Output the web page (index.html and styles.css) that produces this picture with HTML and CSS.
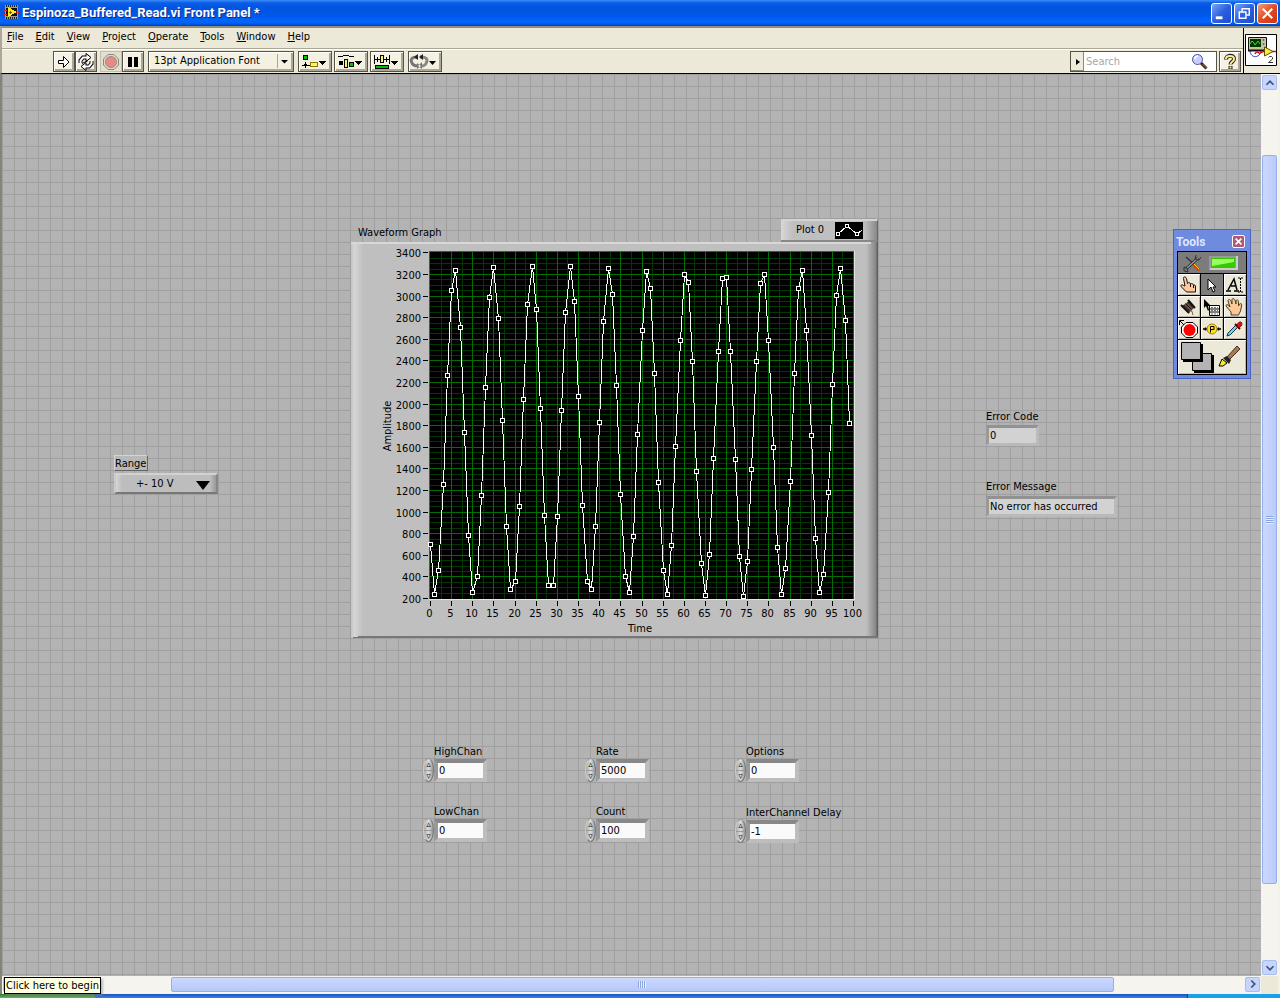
FILE: index.html
```html
<!DOCTYPE html>
<html lang="en">
<head>
<meta charset="utf-8">
<title>Espinoza_Buffered_Read.vi Front Panel *</title>
<link rel="stylesheet" href="styles.css">
</head>
<body>
<header class="titlebar">
  <svg class="app-icon" viewBox="0 0 16 16" shape-rendering="crispEdges"><rect x="2" y="0" width="13" height="14" fill="#9a9a9a"/><path d="M3 1h1M5 1h1M7 1h1M9 1h1M11 1h1M13 1h1M3 13h1M5 13h1M7 13h1M9 13h1M11 13h1M13 13h1" stroke="#222" stroke-width="2"/><rect x="3" y="3" width="11" height="8" fill="#111"/><path d="M5 2l9 5-9 5z" fill="#ffea20"/><path d="M6 7h3M7.500 5.500v3" stroke="#6a6a00"/><path d="M0 5h4M0 9h4M13 7h3" stroke="#e02020"/></svg>
  <h1 class="title">Espinoza_Buffered_Read.vi Front Panel *</h1>
  <button class="win-btn" aria-label="Minimize"><svg viewBox="0 0 20 20"><path d="M4 14.500h7" stroke="#fff" stroke-width="3"/></svg></button>
  <button class="win-btn" aria-label="Restore"><svg viewBox="0 0 20 20" fill="none" stroke="#fff" stroke-width="1.500"><path d="M7.500 8V5h7.500v6.500H12"/><path d="M4.500 8.500h7v6.500h-7z"/></svg></button>
  <button class="win-btn win-close" aria-label="Close"><svg viewBox="0 0 20 20"><path d="M5 5l10 10M15 5L5 15" stroke="#fff" stroke-width="2.200"/></svg></button>
</header>
<div class="head">
  <div class="bars">
    <nav class="menu">
      <a href="#"><u>F</u>ile</a><a href="#"><u>E</u>dit</a><a href="#"><u>V</u>iew</a><a href="#"><u>P</u>roject</a><a href="#"><u>O</u>perate</a><a href="#"><u>T</u>ools</a><a href="#"><u>W</u>indow</a><a href="#"><u>H</u>elp</a>
    </nav>
    <div class="toolbar">
      <div class="pair">
        <button class="tb" aria-label="Run"><svg viewBox="0 0 18 18"><path d="M3.500 7.500h5v-4l5.500 5.500-5.500 5.500v-4h-5z" fill="#fff" stroke="#000"/></svg></button>
        <button class="tb" aria-label="Run continuously"><svg viewBox="0 0 18 18" fill="none"><path d="M3.500 10V7.500L6 4.500h5M14.500 8v2.500L12 13.500H7" stroke="#000" stroke-width="4"/><path d="M9 .5l5 4-5 4zM9 9.500l-5 4 5 4z" fill="#fff" stroke="#000"/><path d="M3.500 10V7.500L6 4.500h5M14.500 8v2.500L12 13.500H7" stroke="#fff" stroke-width="2"/><path d="M5 10.500l6-3" stroke="#000"/></svg></button>
      </div>
      <div class="pair">
        <button class="tb off" aria-label="Abort"><svg viewBox="0 0 18 18"><path d="M6 1.500h6l4.500 4.500v6L12 16.500H6L1.500 12V6z" fill="#ddd8c8" stroke="#8a8a80"/><circle cx="9" cy="9" r="5.500" fill="#e88a84" stroke="#a08a84"/></svg></button>
        <button class="tb" aria-label="Pause"><svg viewBox="0 0 18 18" shape-rendering="crispEdges"><path d="M4 4h4v10H4zM10 4h4v10h-4z"/></svg></button>
      </div>
      <div class="font-wrap"><select class="font" aria-label="Font"><option>13pt Application Font</option></select><svg class="font-arrow" viewBox="0 0 16 16"><path d="M1.500 1v14" stroke="#aaa693"/><path d="M5 7h7l-3.500 3.500z"/></svg></div>
      <button class="tb wide" aria-label="Align objects"><svg viewBox="0 0 32 18" shape-rendering="crispEdges"><rect x="4.500" y="2.500" width="4" height="4" fill="#00c000" stroke="#000"/><path d="M3 12.500h8M6.500 9v6M5 11h3" stroke="#000"/><rect x="11.500" y="9.500" width="7" height="4" fill="#ffef6e" stroke="#8a7800"/><path d="M20 8h7l-3.500 4z"/></svg></button>
      <button class="tb wide" aria-label="Distribute objects"><svg viewBox="0 0 32 18" shape-rendering="crispEdges"><path d="M3 3.500h5M8 2.500h6M14 3.500h5" fill="none" stroke="#000"/><rect x="4" y="8" width="4" height="4"/><rect x="9.500" y="6.500" width="3" height="8" fill="#ffef6e" stroke="#000"/><rect x="14.500" y="9.500" width="4" height="4" fill="#00c000" stroke="#000"/><path d="M20 8h7l-3.500 4z"/></svg></button>
      <button class="tb wide" aria-label="Resize objects"><svg viewBox="0 0 32 18" shape-rendering="crispEdges"><path d="M3.500 2v9M18.500 2v9M4 6.500h5M13 6.500h5M6.500 4v5M15.500 4v5" stroke="#000"/><rect x="9.500" y="2.500" width="3" height="7" fill="#ffef6e" stroke="#000"/><rect x="4.500" y="12.500" width="13" height="3" fill="#00c000" stroke="#000"/><path d="M20 8h7l-3.500 4z"/></svg></button>
      <button class="tb wide last" aria-label="Reorder"><svg viewBox="0 0 32 18"><path d="M8 4C3 4 1.500 6 2.500 9s4 4 6 4" fill="none" stroke="#777" stroke-width="3"/><path d="M11 4c6-.5 8 2 6.500 5.500s-3 3.500-5 3.500" fill="none" stroke="#888" stroke-width="3"/><path d="M9 1v6L5 4zM14 1v6L10 4z" fill="#222"/><path d="M8 10v6l4-3zM13 9v7l-4-3z" fill="#777"/><path d="M20 8h7l-3.500 4z"/></svg></button>
      <div class="spacer"></div>
      <div class="search"><button class="s-arrow" aria-label="Search options"><svg viewBox="0 0 12 16"><path d="M4 5l4 3-4 3z"/></svg></button><input type="text" placeholder="Search" aria-label="Search"><svg class="lens" viewBox="0 0 18 18"><path d="M10 10l5.500 5.500" stroke="#3a2418" stroke-width="3"/><path d="M11.500 11l4 4" stroke="#b07850"/><circle cx="6.500" cy="6.500" r="5" fill="#c8ccff" stroke="#4a50a0"/><path d="M4 6c0-2 1-3 3-3" stroke="#fff" stroke-width="1.500" fill="none"/></svg></div>
      <button class="tb help" aria-label="Context help"><svg viewBox="0 0 18 18"><path d="M5 6.500c0-5 8-5 8-.5 0 3-3.500 2.500-3.500 5.500M9.500 13v3" fill="none" stroke="#222" stroke-width="4"/><path d="M5 6c0-4 8-4 8 0 0 3-3.500 2.500-3.500 5.500M9.500 13.500v2" fill="none" stroke="#ffef8a" stroke-width="2"/></svg></button>
    </div>
  </div>
  <div class="vi-icon">
    <svg viewBox="0 0 32 32"><path d="M.5.500h31v31H.5z" fill="#fff" stroke="#000"/><path d="M3.500 3.500h18v13h-18z" fill="#c8c4a0" stroke="#111"/><path d="M5 5h11v8H5z" fill="#003800"/><path d="M5 10l2-3 2 2 1 2 3-4 2 3" stroke="#30e030" fill="none"/><circle cx="18.500" cy="6" r="1" fill="#666"/><circle cx="18.500" cy="10" r="1" fill="#666"/><path d="M3 16.500h18" stroke="#111" stroke-width="2"/><path d="M5 17c1 8 10 7 11 0" fill="none" stroke="#1830d0"/><path d="M10 20c1-3 3-2 4-1s4-2 7-2M26 17.500h5" stroke="#e01010" stroke-width="1.500" fill="none"/><path d="M19.500 13l8.500 4.500-8.500 4.500z" fill="#ffea30" stroke="#605000"/><path d="M23.500 23.500l1-1h2l1 1v1.500l-4 3.500h4.500" fill="none" stroke="#333"/></svg>
  </div>
</div>
<main class="work">
  <section class="canvas">
    <div class="item range">
      <label class="range-label" for="range">Range</label>
      <div class="range-wrap"><select id="range"><option>+- 10 V</option></select><svg class="range-arrow" viewBox="0 0 14 9"><path d="M0 0h14L7 9z"/></svg></div>
    </div>

    <div class="item graph">
      <div class="graph-top"><h2>Waveform Graph</h2>
        <div class="legend"><span>Plot 0</span><svg viewBox="0 0 28 17" shape-rendering="crispEdges"><path d="M0 0h28v17H0z"/><path d="M3 12l9-8 10 8 5-4" stroke="#fff" fill="none"/><path d="M1.500 10.500h3v3h-3zM10.500 2.500h3v3h-3zM20.500 10.500h3v3h-3z" stroke="#fff"/></svg></div>
      </div>
      <svg class="chart" id="chart" viewBox="351 242 527 396" role="img" aria-label="Waveform Graph">
        <defs>
          <linearGradient id="edgeL"><stop offset="0" stop-color="#c6c6c6"/><stop offset=".3" stop-color="#d6d6d6"/><stop offset="1" stop-color="#bfbfbf"/></linearGradient>
          <linearGradient id="edgeR"><stop offset="0" stop-color="#bfbfbf"/><stop offset=".8" stop-color="#888"/><stop offset="1" stop-color="#555"/></linearGradient>
        </defs>
        <path d="M351 242h527v396H351z" fill="#bfbfbf"/>
        <path d="M351 242h12v396h-12z" fill="url(#edgeL)"/>
        <path d="M866 242h12v396h-12z" fill="url(#edgeR)"/>
        <path d="M351 242h520v2H351z" fill="#d8d8d8"/>
        <path d="M353 637h525v1H353zM358 636h520v1H358z" fill="#777"/>
        <path d="M429 251h426v349H429z" fill="#e4e4e4"/><path d="M429 251h425v348H429z" fill="#505050"/>
        <path d="M430 252h424v347H430z" fill="#000"/>
      </svg>
    </div>

    <div class="item err-code"><label for="ec">Error Code</label><input id="ec" class="field read" value="0" readonly></div>
    <div class="item err-msg"><label for="em">Error Message</label><input id="em" class="field read" value="No error has occurred" readonly></div>

    <div class="item num high"><label for="n1">HighChan</label><div class="row"><div class="spin"><button aria-label="Increase">▵</button><button aria-label="Decrease">▿</button></div><input id="n1" class="field" value="0"></div></div>
    <div class="item num rate"><label for="n2">Rate</label><div class="row"><div class="spin"><button aria-label="Increase">▵</button><button aria-label="Decrease">▿</button></div><input id="n2" class="field" value="5000"></div></div>
    <div class="item num options"><label for="n3">Options</label><div class="row"><div class="spin"><button aria-label="Increase">▵</button><button aria-label="Decrease">▿</button></div><input id="n3" class="field" value="0"></div></div>
    <div class="item num low"><label for="n4">LowChan</label><div class="row"><div class="spin"><button aria-label="Increase">▵</button><button aria-label="Decrease">▿</button></div><input id="n4" class="field" value="0"></div></div>
    <div class="item num count"><label for="n5">Count</label><div class="row"><div class="spin"><button aria-label="Increase">▵</button><button aria-label="Decrease">▿</button></div><input id="n5" class="field" value="100"></div></div>
    <div class="item num delay"><label for="n6">InterChannel Delay</label><div class="row"><div class="spin"><button aria-label="Increase">▵</button><button aria-label="Decrease">▿</button></div><input id="n6" class="field" value="-1"></div></div>

    <aside class="item palette">
      <div class="p-title"><span>Tools</span><button aria-label="Close tools"><svg viewBox="0 0 11 11"><path d="M2 2l7 7M9 2L2 9" stroke="#fff" stroke-width="2"/></svg></button></div>
      <div class="p-grid">
        <button class="auto" aria-label="Automatic tool selection"><svg viewBox="0 0 68 20"><path d="M8 4l9 8" stroke="#333" stroke-width="1.500"/><path d="M15 11l6 6" stroke="#ff3000" stroke-width="3"/><path d="M16 11l5 5" stroke="#ffd020"/><path d="M20 5L8 16" stroke="#222" stroke-width="3"/><path d="M20 5L8 16" stroke="#999" stroke-width="1.500"/><path d="M18 2l-1 4 4 1 2-3M6 14l3 1 1 4-4-1z" fill="none" stroke="#333"/><path d="M31 3h28v14H31z" fill="#999"/><path d="M32 16h27V3" stroke="#ccc" stroke-width="2" fill="none"/><path d="M33 5h24v10H33z" fill="#38c800"/><path d="M34 6h22v3l-22 4z" fill="#96ff60"/></svg></button>
        <button aria-label="Operate"><svg viewBox="0 0 22 20"><path d="M7 11L5.500 3.500C5 1.500 8 1.500 8.500 3.500l1 5c1-1.500 2.500-1 3 .5 1.500-1 2.500 0 3 1 1.500-.5 2 .5 2 2v5h-9l-5-5c-1.500-2 .5-3 2-1.500z" fill="#ffc898" stroke="#111"/><path d="M12.500 9v3M15.500 10v3" stroke="#111"/></svg></button>
        <button class="on" aria-label="Position"><svg viewBox="0 0 22 20"><path d="M7 4v11l3-3 2 5 2-1-2-4h3z" fill="#fff" stroke="#000"/></svg></button>
        <button aria-label="Edit text"><svg viewBox="0 0 22 20"><path d="M2 16h5M10 16h5M4 15L10 4l3 11M7 11h5" fill="none" stroke="#000" stroke-width="1.500"/><path d="M14 3h5M14 17h5M16.500 3v14" stroke="#000" stroke-dasharray="2 1"/></svg></button>
        <button aria-label="Wire"><svg viewBox="0 0 22 20"><path d="M4 9l7-5 6 6-6 6z" fill="#6b5040"/><path d="M3 8l8 8M10 3l7 8" stroke="#111" stroke-width="2"/><path d="M5.500 8l6 6M7.500 6.500l6 6M9.500 5l6 6" stroke="#111"/><path d="M13 14c2 0 1 2 2 4" stroke="#6b5040" fill="none"/></svg></button>
        <button aria-label="Shortcut menu"><svg viewBox="0 0 22 20"><path d="M3 2v9l2-2 2 5 1-1-1-4h3z"/><path d="M8.500 8.500h10v10h-10z" fill="#fff" stroke="#000"/><path d="M8 12h11M8 15h11" stroke="#000"/><path d="M10 10.500h7M10 13.500h7M10 17h7" stroke="#777" stroke-dasharray="2 1"/></svg></button>
        <button aria-label="Scroll"><svg viewBox="0 0 22 20"><path d="M7 18v-3l-5-6c0-2 2-2 4 1L4 4c0-2 2-2 3 0l1 3V3c0-2 2-2 3 0l1 4V4c1-2 2.500-1 2.500 1v4l1-2c2-1 2.500 0 2 2l-1 5-2 4z" fill="#ffc898" stroke="#442"/></svg></button>
        <button aria-label="Breakpoint"><svg viewBox="0 0 22 20"><path d="M8 3.500h7l4.500 4.500v6L15 18.500H8L3.500 14V8z" fill="#fff" stroke="#000"/><circle cx="11.500" cy="11" r="6" fill="#f00"/><path d="M1.500 6V1.500H6M2 2l4 4" fill="none" stroke="#000"/></svg></button>
        <button aria-label="Probe"><svg viewBox="0 0 22 20"><path d="M2 10h4M16 10h4M4.500 8.500v3M17.500 8.500v3" stroke="#000" stroke-width="1.500"/><circle cx="11" cy="10" r="5" fill="#ffe020" stroke="#a08000"/><path d="M9.500 13.500v-6h3.500v3H9.500" fill="none" stroke="#000"/></svg></button>
        <button aria-label="Get color"><svg viewBox="0 0 22 20"><path d="M3 17l1-3 8-8 2 2-8 8z" fill="#60d8e8" stroke="#234"/><path d="M11 5l5 5" stroke="#400" stroke-width="2"/><path d="M13 6c2-5 7-3 4 1l-3 2z" fill="#d01818" stroke="#800"/></svg></button>
        <button class="color" aria-label="Set color"><svg viewBox="0 0 68 34"><path d="M16 15h20v18H16z"/><path d="M14.500 13.500h19v17h-19z" fill="#b4b4b4" stroke="#000"/><path d="M5 4h20v18H5z"/><path d="M3.500 2.500h19v17h-19z" fill="#b4b4b4" stroke="#000"/><path d="M49 17L59 6l3 3-11 11z" fill="#a87858" stroke="#432"/><path d="M45 18l4-2 4 4-2 4z" fill="#222"/><path d="M44 19l5 4-4 3h-4z" fill="#f4f020" stroke="#000"/></svg></button>
      </div>
    </aside>
  </section>
  <div class="vscroll"><button aria-label="Scroll up"><svg viewBox="0 0 16 16"><path d="M4 10l4-4 4 4" /></svg></button><div class="vthumb"><i class="grip"></i></div><button aria-label="Scroll down"><svg viewBox="0 0 16 16"><path d="M4 6l4 4 4-4"/></svg></button></div>
  <div class="hscroll"><button aria-label="Scroll left"><svg viewBox="0 0 16 16"><path d="M10 4L6 8l4 4"/></svg></button><div class="hthumb"><i class="grip"></i></div><button aria-label="Scroll right"><svg viewBox="0 0 16 16"><path d="M6 4l4 4-4 4"/></svg></button></div>
  <div class="corner"></div>
</main>
<footer class="taskbar"><div class="start"></div><div class="tray"></div></footer>
<div class="tooltip" role="tooltip">Click here to begin</div>
<script src="chart.js"></script>
</body>
</html>
```
FILE: styles.css
```css
* { box-sizing: border-box; }
body { margin: 0; height: 100vh; display: flex; flex-direction: column; overflow: hidden; background: #ece9d8; font: 11px/14px Tahoma, "DejaVu Sans Condensed", "Noto Sans", sans-serif; color: #000; }
button, input, select { font: inherit; color: inherit; margin: 0; padding: 0; border-radius: 0; }
button { display: flex; align-items: center; justify-content: center; }
svg { display: block; flex: none; }
h1, h2 { margin: 0; font: inherit; }

.titlebar { flex: none; height: 26px; display: flex; align-items: center; gap: 2px; padding: 0 2px 0 3px; background: linear-gradient(#3c8cf8 0, #0a5ce8 3px, #0054e0 8px, #0058ea 16px, #0066ff 21px, #0062f4 23px, #0040c0 26px); }
.app-icon { width: 16px; height: 16px; }
.title { flex: 1; color: #fff; font: bold 13px/20px "Trebuchet MS", Roboto, sans-serif; text-shadow: 1px 1px #0a2a80; white-space: nowrap; padding-left: 1px; }
.win-btn { width: 21px; height: 21px; border: 1px solid #fff; border-radius: 3px; background: linear-gradient(135deg, #7ba4f4, #2c60e0 50%, #1c4cd0); }
.win-btn svg { width: 19px; height: 19px; }
.win-close { background: linear-gradient(135deg, #f0a080, #e04c24 50%, #c83810); }

.head { flex: none; display: flex; height: 48px; border-top: 2px solid #918e80; border-bottom: 1px solid #000; border-left: 2px solid #aca899; }
.bars { flex: 1; display: flex; flex-direction: column; }
.menu { height: 20px; display: flex; gap: 12px; padding: 2px 5px 0; }
.menu a { color: inherit; text-decoration: none; }
.toolbar { flex: 1; display: flex; align-items: center; border-top: 1px solid #aca899; box-shadow: inset 0 1px #fff; padding: 2px 2px 1px 51px; gap: 4px; }
.pair { display: flex; }
.pair + .pair { margin-left: -1px; }
.tb { width: 22px; height: 21px; border: 1px solid #55534a; background: #f4f1e2; box-shadow: inset 1px 1px #fff, inset -2px -2px #aca899; }
.tb svg { width: 18px; height: 18px; }
.tb.off { background: #e2dfce; border-color: #c2bfae; box-shadow: none; }
.tb.wide { width: 34px; margin-right: -2px; }
.tb.wide svg { width: 32px; }
.tb.last { margin-left: 2px; }
.font-wrap { position: relative; width: 146px; }
.font { appearance: none; width: 100%; height: 21px; border: 1px solid #55534a; background: #f4f1e2; box-shadow: inset 1px 1px #fff, inset -2px -2px #aca899; padding: 0 20px 2px 5px; }
.font-arrow { position: absolute; right: 2px; top: 2px; width: 16px; height: 16px; pointer-events: none; }
.spacer { flex: 1; }
.search { width: 147px; height: 21px; display: flex; align-items: center; border: 1px solid #55534a; background: #fff; }
.s-arrow { width: 13px; height: 19px; border: 0; background: #f0ecdc; box-shadow: inset -1px -1px #8a887c; }
.s-arrow svg { width: 12px; height: 16px; }
.search input { flex: 1; min-width: 0; border: 0; outline: 0; background: none; padding: 0 2px; }
.search input::placeholder { color: #a8a8a8; }
.lens { width: 18px; height: 18px; margin-right: 7px; }
.help { margin-left: -2px; }
.vi-icon { width: 37px; border-left: 1px solid #000; padding: 6px 1px; }
.vi-icon svg { width: 32px; height: 32px; }

.work { flex: 1; min-height: 0; display: grid; grid-template: minmax(0, 1fr) 18px / minmax(0, 1fr) 17px; border-left: 2px solid #85837a; border-right: 2px solid #f4f2e6; }
.canvas { position: relative; overflow: hidden; background: linear-gradient(90deg, #9f9f9f 1px, transparent 1px) 0 0 / 12px 12px, linear-gradient(#9f9f9f 1px, #b3b3b3 1px) 0 0 / 12px 12px; }
.item { position: absolute; }
.item label { display: block; white-space: nowrap; }

.range { left: 112px; top: 381px; width: 105px; }
.item .range-label { width: 34px; height: 16px; border: 1px solid; border-color: #d4d4d4 #666 #666 #d4d4d4; line-height: 15px; background: #b8b8b8; }
.range-wrap { position: relative; margin-top: 2px; }
#range { appearance: none; width: 104px; height: 21px; padding: 0 0 0 20px; border: 2px solid; border-color: #d2d2d2 #888 #777 #cacaca; background: linear-gradient(90deg, #d6d6d6, #bdbdbd 6px, #bdbdbd 94px, #999); }
.range-arrow { position: absolute; left: 82px; top: 8px; width: 14px; height: 9px; pointer-events: none; }

.graph { left: 349px; top: 145px; width: 527px; }
.graph-top { display: flex; justify-content: space-between; align-items: flex-start; }
.graph-top h2 { padding: 7px 0 0 7px; }
.legend { width: 97px; height: 23px; display: flex; align-items: center; gap: 11px; padding: 0 0 1px 15px; border-top: 2px solid #d4d4d4; border-bottom: 2px solid #888; border-right: 1px solid #666; background: linear-gradient(90deg, #d8d8d8, #bfbfbf 12px, #bfbfbf 84px, #888); }
.legend svg { width: 28px; height: 17px; }
.chart { width: 100%; height: auto; }
.chart text { font-size: 11px; fill: #000; }

.field { display: block; width: 53px; height: 23px; padding: 0 2px 0 1px; border: 4px solid; border-color: #888 #bdbdbd #bdbdbd #999; background: #fafafa; outline: 0; line-height: 15px; }
.read { background: #d2d2d2; border-color: #929292 #bababa #bababa #999; border-width: 3px; height: 21px; }
.err-code { left: 984px; top: 336px; }
.err-code .field { margin-top: 1px; }
.err-msg { left: 984px; top: 406px; }
.err-msg .field { width: 131px; margin-top: 2px; }

.num { width: 66px; }
.item.num label { padding-left: 11px; line-height: 13px; }
.row { display: flex; align-items: center; }
.spin { width: 11px; height: 24px; display: flex; flex-direction: column; border-radius: 50%; border: 1px solid; border-color: #999 #777 #777 #ccc; background: linear-gradient(90deg, #aaa, #ddd 50%, #999); overflow: hidden; }
.spin button { flex: 1; height: 11px; border: 0; background: none; font-size: 9px; line-height: 10px; }
.spin button:first-child { border-bottom: 1px solid #999; }
.high { left: 421px; top: 671px; }
.low { left: 421px; top: 731px; }
.rate { left: 583px; top: 671px; }
.count { left: 583px; top: 731px; }
.options { left: 733px; top: 671px; }
.delay { left: 733px; top: 732px; }

.palette { left: 1171px; top: 155px; width: 78px; padding: 2px 3px 3px; background: #6f8be0; border: 1px solid #4c62c4; }
.p-title { display: flex; justify-content: space-between; align-items: center; height: 19px; color: #dfe6ff; font: bold 12px/16px "Trebuchet MS", Roboto, sans-serif; margin: 0 -1px; }
.p-title button { width: 13px; height: 13px; border: 1px solid #fff; border-radius: 2px; background: #b05a78; margin-right: 3px; }
.p-title svg { width: 9px; height: 9px; }
.p-grid { display: grid; grid-template-columns: 22px 22px 22px; grid-template-rows: 21px 21px 21px 21px 34px; gap: 1px; padding: 1px; background: #000; }
.p-grid button { border: 0; background: #ece9d8; box-shadow: inset 1px 1px #fff, inset -1px -1px #bdb9a6; }
.p-grid button svg { width: 22px; height: 20px; }
.p-grid .auto, .p-grid .color { grid-column: 1 / -1; }
.p-grid .auto { background: #7c7c7c; box-shadow: none; }
.p-grid .on { background: #7c7c7c; box-shadow: none; }
.p-grid .auto svg { width: 68px; }
.p-grid .color svg { width: 68px; height: 34px; }

.vscroll, .hscroll { display: flex; background: #f5f4ee; }
.vscroll { flex-direction: column; padding: 1px; }
.vscroll button, .hscroll button { width: 15px; height: 15px; flex: none; border: 1px solid #a8bcf0; border-radius: 2px; background: #c6d5fd; }
.vscroll button svg, .hscroll button svg { width: 14px; height: 14px; fill: none; stroke: #3d5478; stroke-width: 2; }
.vthumb, .hthumb { display: flex; align-items: center; justify-content: center; background: linear-gradient(90deg, #cbd9ff, #b9cbf8); border: 1px solid #98b0ea; border-radius: 2px; }
.vthumb { height: 81%; margin-top: 65px; }
.vscroll button:last-child { margin-top: auto; }
.hscroll { padding: 0 1px 2px; align-items: center; }
.hthumb { width: 75%; height: 15px; margin-left: 153px; background: linear-gradient(#cbd9ff, #b5c8f8); }
.hscroll button:last-child { margin-left: auto; }
.grip { width: 8px; height: 7px; background: repeating-linear-gradient(90deg, #8ba4e0 0 1px, #e8efff 1px 2px); }
.vthumb .grip { background: repeating-linear-gradient(#8ba4e0 0 1px, #e8efff 1px 2px); height: 8px; width: 7px; }
.corner { background: #ece9d8; }

.taskbar { flex: none; height: 4px; display: flex; justify-content: space-between; background: linear-gradient(#1b50b8, #3a80f0); }
.start { width: 95px; border-radius: 0 6px 0 0; background: linear-gradient(#2d7a2d, #5cb85c); }
.tray { width: 93px; border-left: 1px solid #0a3a80; background: #18a0ea; }
.tooltip { position: absolute; left: 4px; bottom: 4px; height: 17px; padding: 0 1px; border: 1px solid #000; background: #ffffe1; box-shadow: 2px 2px 2px #8888; white-space: nowrap; line-height: 16px; }
```
FILE: chart.js
```js
const NS = "http://www.w3.org/2000/svg";
const chart = document.getElementById("chart");

function add(tag, attrs, text) {
  const el = document.createElementNS(NS, tag);
  for (const key in attrs) el.setAttribute(key, attrs[key]);
  if (text !== undefined) el.textContent = text;
  chart.appendChild(el);
}

const xAt = t => Math.round(430 + t * 4.23) + 0.5;
const yAt = v => Math.round(598 - (v - 200) * 0.108) + 0.5;

let minor = "", major = "", ticks = "";
for (let v = 250; v < 3400; v += 50) {
  if (v % 200) minor += `M430 ${yAt(v)}H854`;
  else major += `M430 ${yAt(v)}H854`;
}
for (let t = 2.5; t <= 100; t += 2.5) {
  if (t % 5) minor += `M${xAt(t)} 252V599`;
  else major += `M${xAt(t)} 252V599`;
}
add("path", { d: minor, stroke: "#003a00", "shape-rendering": "crispEdges" });
add("path", { d: major, stroke: "#007000", "shape-rendering": "crispEdges" });

for (let v = 200; v <= 3400; v += 200) {
  ticks += `M423 ${yAt(v)}H428`;
  add("text", { x: 421, y: yAt(v) + 4, "text-anchor": "end" }, v);
}
for (let t = 0; t <= 100; t += 5) {
  ticks += `M${xAt(t)} 601V606`;
  add("text", { x: xAt(t) - 1, y: 617, "text-anchor": "middle" }, t);
}
add("path", { d: ticks, stroke: "#000", "shape-rendering": "crispEdges" });
add("text", { x: 640, y: 632, "text-anchor": "middle" }, "Time");
add("text", { transform: "translate(391 426) rotate(-90)", "text-anchor": "middle" }, "Amplitude");

// Vertical position of each sample in chart units.
const samples = [
  544, 594, 570, 484, 375, 290, 270, 327, 432, 535,
  592, 576, 495, 387, 297, 267, 318, 420, 526, 589,
  581, 506, 399, 304, 266, 309, 408, 515, 585, 585,
  516, 410, 312, 266, 301, 396, 505, 581, 589, 526,
  422, 321, 268, 294, 385, 494, 576, 592, 536, 434,
  330, 271, 288, 373, 482, 570, 594, 545, 446, 340,
  274, 282, 361, 471, 563, 595, 554, 458, 351, 278,
  277, 351, 459, 556, 596, 561, 469, 361, 283, 274,
  340, 447, 547, 594, 568, 481, 373, 288, 270, 330,
  435, 538, 592, 574, 492, 384, 295, 268, 320, 423
];
const points = samples.map((y, i) => [xAt(i), y + 0.5]);
add("polyline", { points: points.join(" "), fill: "none", stroke: "#fff", "shape-rendering": "crispEdges" });
const marks = points.map(([x, y]) => `M${x - 2} ${y - 2}h4v4h-4z`).join("");
add("path", { d: marks, fill: "#000", stroke: "#fff", "shape-rendering": "crispEdges" });
```
